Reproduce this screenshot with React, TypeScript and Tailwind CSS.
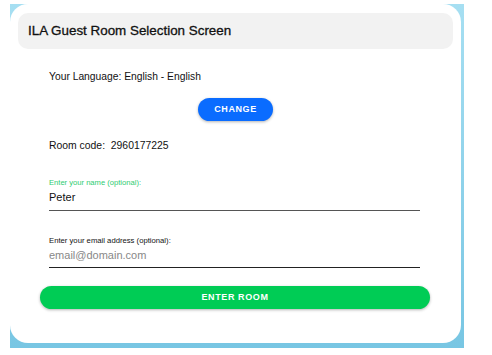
export default function App() {
  return (
    <div className="w-[492px] h-[355px] bg-white pt-[4px] pl-[10px] font-['Liberation_Sans',Arial,sans-serif]">
      <div className="w-[454px] h-[344px] bg-gradient-to-b from-[#a6dff2] to-[#78c6e3] pr-[3px] pb-[5px]">
        <div className="w-full h-full bg-white rounded-[18px] pt-[9px] px-[8px]">
          <div className="h-[36px] rounded-[10px] bg-[#f2f2f2] flex items-center pl-[10px]">
            <h1 className="text-[13.4px] font-normal text-[#111] [-webkit-text-stroke:0.3px_#111]">ILA Guest Room Selection Screen</h1>
          </div>

          <div className="pl-[31px] pt-[20px] text-[10.3px] text-[#111]">Your Language: English - English</div>

          <div className="flex justify-center pt-[14px]">
            <button className="w-[75px] h-[23px] rounded-full bg-[#0a6cff] text-white text-[9px] font-bold tracking-[0.6px] shadow-[0_1px_3px_rgba(0,0,0,0.3)]">
              CHANGE
            </button>
          </div>

          <div className="pl-[31px] pt-[17px] text-[10.4px] text-[#111] whitespace-pre">Room code:  2960177225</div>

          <div className="pl-[31px] pr-[33px] pt-[23px]">
            <div className="text-[7.6px] text-[#2ecc71]">Enter your name (optional):</div>
            <div className="text-[11px] text-[#111] pt-[1px] pb-[4px] border-b border-[#555]">Peter</div>
          </div>

          <div className="pl-[31px] pr-[33px] pt-[24px]">
            <div className="text-[7.7px] text-[#111]">Enter your email address (optional):</div>
            <div className="text-[11px] text-[#888] pt-[1px] pb-[3px] border-b border-[#222]">email@domain.com</div>
          </div>

          <div className="pl-[22px] pr-[23px] pt-[15px]">
            <button className="w-full h-[23px] rounded-full bg-[#00cc55] text-white text-[9px] font-bold tracking-[0.6px] shadow-[0_1px_3px_rgba(0,0,0,0.3)]">
              ENTER ROOM
            </button>
          </div>
        </div>
      </div>
    </div>
  );
}
